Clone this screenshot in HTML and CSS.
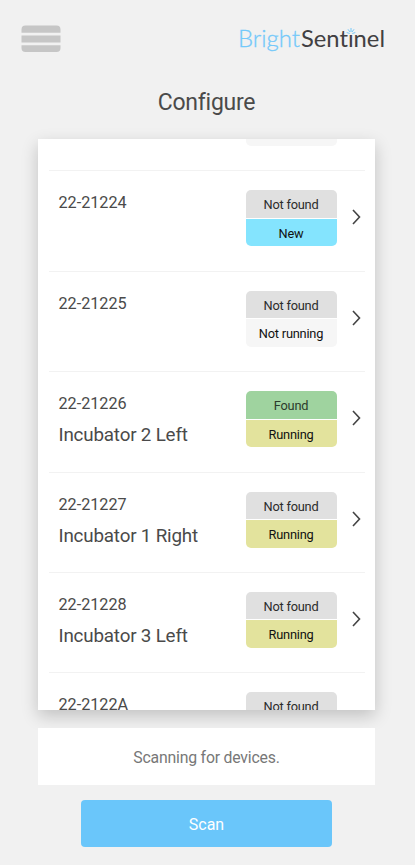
FILE: index.html
```html
<!DOCTYPE html>
<html lang="en">
<head>
    <meta charset="UTF-8">
    <meta name="viewport" content="width=device-width, initial-scale=1">
    <title>BrightSentinel - Configure</title>
    <link rel="stylesheet" href="styles.css">
</head>
<body>
    <header class="topbar">
        <button class="menu" aria-label="Menu">
            <svg width="40" height="28" viewBox="0 0 40 28">
                <path d="M.5 7.800V4.500a4 4 0 0 1 4-4h31a4 4 0 0 1 4 4v3.300z"/>
                <path d="M.5 10.500h39v7H.5z"/>
                <path d="M.5 20.200h39V23a4 4 0 0 1-4 4h-31a4 4 0 0 1-4-4z"/>
            </svg>
        </button>
        <svg class="logo" width="150" height="36" viewBox="0 0 150 36">
            <text class="logo-bright" x="2" y="26" textLength="62" lengthAdjust="spacingAndGlyphs">Bright</text>
            <text class="logo-sentinel" x="65" y="26" textLength="84" lengthAdjust="spacingAndGlyphs">Sent&#305;nel</text>
            <path class="logo-rays" d="M110.700 11.500l3 1M112 8.300l2 2.700M115 7v4M118 8.300l-2 2.700M119.300 11.500l-3 1"/>
        </svg>
    </header>
    <h1>Configure</h1>
    <main class="devices">
        <div class="device first">
            <div class="badges"><span class="badge idle"></span></div>
        </div>
        <div class="device">
            <div class="info"><div class="serial">22-21224</div></div>
            <div class="badges"><span class="badge missing">Not found</span><span class="badge new">New</span></div>
            <svg class="arrow" width="9" height="16" viewBox="0 0 9 16"><path d="M1 1l6.500 7L1 15"/></svg>
        </div>
        <div class="device">
            <div class="info"><div class="serial">22-21225</div></div>
            <div class="badges"><span class="badge missing">Not found</span><span class="badge idle">Not running</span></div>
            <svg class="arrow" width="9" height="16" viewBox="0 0 9 16"><path d="M1 1l6.500 7L1 15"/></svg>
        </div>
        <div class="device">
            <div class="info"><div class="serial">22-21226</div><div class="name">Incubator 2 Left</div></div>
            <div class="badges"><span class="badge found">Found</span><span class="badge running">Running</span></div>
            <svg class="arrow" width="9" height="16" viewBox="0 0 9 16"><path d="M1 1l6.500 7L1 15"/></svg>
        </div>
        <div class="device">
            <div class="info"><div class="serial">22-21227</div><div class="name">Incubator 1 Right</div></div>
            <div class="badges"><span class="badge missing">Not found</span><span class="badge running">Running</span></div>
            <svg class="arrow" width="9" height="16" viewBox="0 0 9 16"><path d="M1 1l6.500 7L1 15"/></svg>
        </div>
        <div class="device">
            <div class="info"><div class="serial">22-21228</div><div class="name">Incubator 3 Left</div></div>
            <div class="badges"><span class="badge missing">Not found</span><span class="badge running">Running</span></div>
            <svg class="arrow" width="9" height="16" viewBox="0 0 9 16"><path d="M1 1l6.500 7L1 15"/></svg>
        </div>
        <div class="device">
            <div class="info"><div class="serial">22-2122A</div></div>
            <div class="badges"><span class="badge missing">Not found</span></div>
        </div>
    </main>
    <div class="status">Scanning for devices.</div>
    <button class="scan">Scan</button>
</body>
</html>
```
FILE: styles.css
```css
* { box-sizing: border-box; }
body { font-family: Roboto, "Liberation Sans", sans-serif; background: #f1f1f1; color: #4a4a4a; margin: 0; height: 865px; overflow: hidden; display: flex; flex-direction: column; }
button { border: 0; padding: 0; font-family: inherit; }

.topbar { display: flex; justify-content: space-between; padding: 25px 29px 0 21px; height: 85px; }
.menu { background: none; width: 40px; height: 28px; }
.menu svg { display: block; fill: #c6c6c6; }
.logo { margin-top: -4px; font-family: Lato, sans-serif; font-size: 23px; font-variant-ligatures: none; }
.logo-bright { fill: #74c9fa; font-weight: 300; stroke: #74c9fa; stroke-width: .3; }
.logo-sentinel { fill: #414042; }
.logo-rays { fill: none; stroke: #74c9fa; stroke-width: 1; }

h1 { margin: 0; height: 54px; line-height: 35px; font-size: 23px; letter-spacing: -.25px; font-weight: 400; text-align: center; padding-right: 2px; }

.devices { margin: 0 40px 0 38px; height: 571px; flex: none; background: #fff; overflow: hidden; padding: 0 10.5px; box-shadow: 0 6px 16px rgba(0, 0, 0, .2); }
.device { display: flex; height: 100.45px; padding: 19px 4px 0 10px; border-bottom: 1px solid #f2f2f2; }
.device.first { height: 32.2px; padding-top: 0; justify-content: flex-end; padding-right: 28px; }
.info { flex: 1; padding-top: 2px; }
.serial { font-size: 16.2px; line-height: 22px; }
.name { font-size: 18.8px; letter-spacing: -.18px; line-height: 24px; margin-top: 8px; }

.badges { width: 91px; height: 56px; display: flex; flex-direction: column; gap: 1px; border-radius: 5px; overflow: hidden; }
.badge { height: 27.5px; line-height: 29px; font-size: 12.8px; letter-spacing: -.22px; text-align: center; color: #111; }
.first .badges { height: 6.5px; border-radius: 0 0 5px 5px; }
.missing { background: #e0e0e0; color: #2c2c2c; }
.found { background: #9fd39f; color: #2c3c2c; }
.new { background: #84e4fe; }
.idle { background: #f6f6f6; }
.running { background: #e3e39d; }
.arrow { margin: 19px 0 0 15px; fill: none; stroke: #444; stroke-width: 1.6; }
.device:last-child { padding-right: 28px; border: 0; }

.status { margin: 18px 40px 0 38px; height: 57px; line-height: 59px; background: #fff; color: #777; font-size: 15.8px; letter-spacing: -.2px; text-align: center; position: relative; }
.scan { margin: 15px 0 0 81px; width: 251px; height: 47px; line-height: 49px; border-radius: 4px; background: #6ac6fa; color: #fff; font-size: 16px; }
```
